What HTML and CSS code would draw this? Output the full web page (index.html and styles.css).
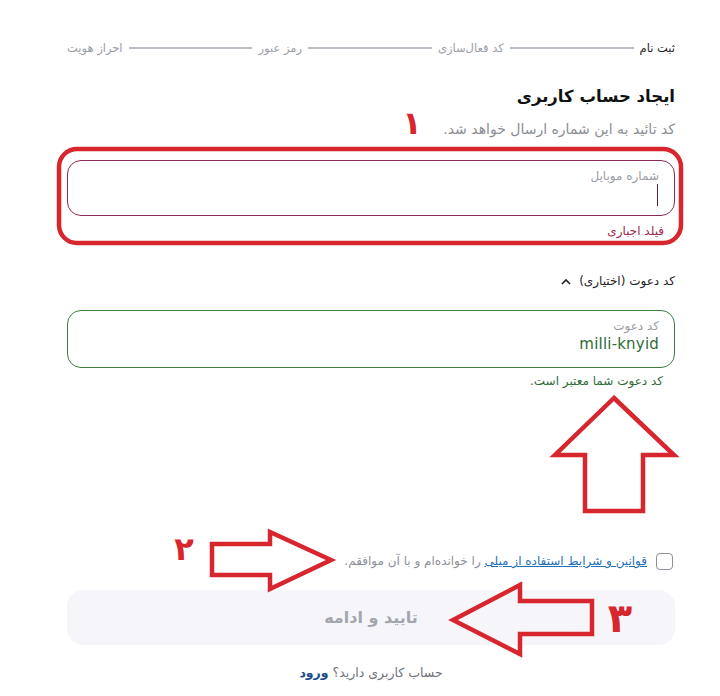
FILE: index.html
```html
<!DOCTYPE html>
<html lang="fa">
<head>
<meta charset="utf-8">
<title>ایجاد حساب کاربری</title>
<link rel="stylesheet" href="styles.css">
</head>
<body>
<main class="page" dir="rtl">
  <nav class="stepper">
    <span class="step active">ثبت نام</span><span class="line"></span>
    <span class="step">کد فعال‌سازی</span><span class="line"></span>
    <span class="step">رمز عبور</span><span class="line"></span>
    <span class="step">احراز هویت</span>
  </nav>

  <h1 class="title">ایجاد حساب کاربری</h1>
  <p class="subtitle">کد تائید به این شماره ارسال خواهد شد.</p>

  <div class="field field-error">
    <div class="field-label">شماره موبایل</div>
    <span class="caret"></span>
  </div>
  <p class="hint hint-error">فیلد اجباری</p>

  <div class="toggle">
    <span>کد دعوت (اختیاری)</span>
    <svg class="chevron" width="10" height="7" viewBox="0 0 10 7"><polyline points="1,6 5,2 9,6" fill="none" stroke="#222" stroke-width="1.6"/></svg>
  </div>

  <div class="field field-ok">
    <div class="field-label">کد دعوت</div>
    <div class="field-value" dir="ltr">milli-knyid</div>
  </div>
  <p class="hint hint-ok">کد دعوت شما معتبر است.</p>

  <div class="terms">
    <span class="checkbox"></span>
    <span class="terms-text"><a class="terms-link">قوانین و شرایط استفاده از میلی</a> را خوانده‌ام و با آن موافقم.</span>
  </div>

  <button class="submit">تایید و ادامه</button>

  <p class="footer">حساب کاربری دارید؟ <a class="login">ورود</a></p>
</main>

<svg class="annotations" width="720" height="696" viewBox="0 0 720 696">
  <g fill="none" stroke="#d7262e" stroke-width="4.5" stroke-linejoin="miter">
    <rect x="59" y="149" width="622" height="94" rx="18"/>
    <polygon points="614,398 674,455 643,455 643,511 585,511 585,455 555,455"/>
    <polygon points="212,544 270,544 270,532 331,560 270,589 270,575 212,575"/>
    <polygon points="453,620 520,585 520,601 592,601 592,634 520,634 520,654"/>
  </g>
  <g class="nums" fill="#d7262e">
    <text x="412" y="134">۱</text>
    <text x="184" y="560">۲</text>
    <text x="620" y="632" class="big">۳</text>
  </g>
</svg>
</body>
</html>
```

FILE: styles.css
```css
* { box-sizing: border-box; }
html, body { margin: 0; padding: 0; background: #fff; }
body {
  font-family: "DejaVu Sans", "Noto Sans", sans-serif;
  color: #222;
  width: 720px;
  height: 696px;
  overflow: hidden;
  position: relative;
}
.page {
  width: 608px;
  margin-left: 67px;
  padding-top: 38px;
}
.stepper {
  display: flex;
  align-items: center;
  gap: 6px;
  height: 20px;
  font-size: 11.5px;
  color: #9b9ea6;
}
.step { white-space: nowrap; line-height: 20px; }
.step.active { color: #1f1f1f; }
.line { flex: 1; height: 2px; background: #b9bcc3; }

.title {
  margin: 25px 0 0;
  font-size: 16.5px;
  font-weight: bold;
  line-height: 28px;
  color: #111;
}
.subtitle {
  margin: 8px 0 0;
  font-size: 14px;
  line-height: 20px;
  color: #8a8d94;
}

.field {
  border: 1px solid;
  border-radius: 14px;
  padding: 7px 15px 0;
}
.field-error {
  margin-top: 21px;
  height: 56px;
  border-color: #8e2a56;
}
.field-ok {
  margin-top: 19px;
  height: 58px;
  border-color: #3d7d40;
}
.field-label {
  font-size: 12px;
  line-height: 16px;
  color: #9a9ca3;
}
.caret {
  display: block;
  width: 1.5px;
  height: 22px;
  margin: 0 1px 0 0;
  background: #5a2038;
}
.field-value {
  font-size: 15px;
  line-height: 20px;
  color: #2e6b35;
  text-align: right;
  letter-spacing: 0.2px;
}

.hint {
  margin: 0;
  font-size: 12px;
  line-height: 18px;
}
.hint-error { margin-top: 6px; padding-right: 11px; color: #a1264d; }
.hint-ok { margin-top: 4px; padding-right: 12px; color: #2e6b35; }

.toggle {
  display: flex;
  align-items: center;
  gap: 8px;
  margin-top: 31px;
  font-size: 12px;
  line-height: 20px;
  color: #222;
}
.chevron { display: block; }

.terms {
  display: flex;
  align-items: center;
  gap: 9px;
  margin-top: 161px;
  padding-right: 2px;
  height: 20px;
  font-size: 12px;
  color: #8d9098;
}
.checkbox {
  width: 17px;
  height: 17px;
  border: 1.5px solid #8d9099;
  border-radius: 4px;
  flex: none;
}
.terms-link {
  color: #1e6fb8;
  text-decoration: underline;
}

.submit {
  display: block;
  width: 100%;
  height: 55px;
  margin-top: 19px;
  border: none;
  border-radius: 16px;
  background: #f6f6fa;
  font-family: inherit;
  font-size: 16px;
  font-weight: bold;
  color: #a3a6ae;
}

.footer {
  margin: 18px 0 0;
  text-align: center;
  font-size: 12.5px;
  line-height: 20px;
  color: #6f7279;
}
.login { color: #1c4d8c; font-weight: bold; text-decoration: none; }

.annotations {
  position: absolute;
  top: 0;
  left: 0;
  pointer-events: none;
}
.nums text {
  font-family: "DejaVu Sans", sans-serif;
  font-weight: bold;
  font-size: 32px;
  text-anchor: middle;
}
.nums text.big { font-size: 40px; }
```
